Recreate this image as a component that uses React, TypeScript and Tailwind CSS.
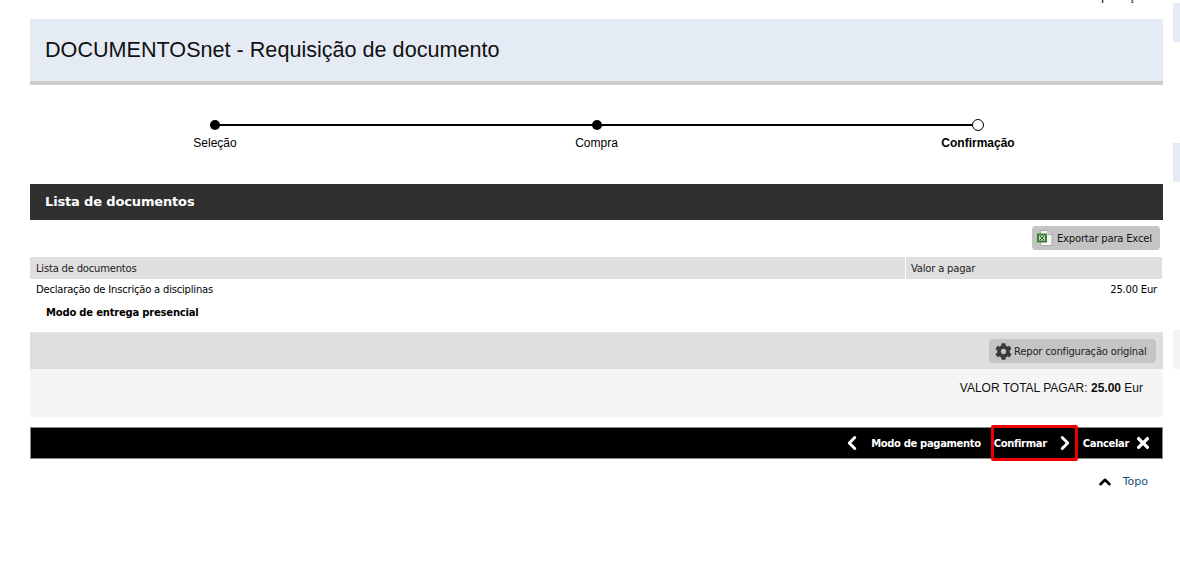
import { ChevronLeft, ChevronRight, ChevronUp } from "lucide-react";
import { FaCog, FaTimes } from "react-icons/fa";

const tableFont = "font-['DejaVu_Sans',sans-serif] text-[10px] tracking-[-0.2px]";

function ExcelIcon() {
  return (
    <svg width="16" height="16" viewBox="0 0 16 16">
      <path d="M3.5 0.5H11L15 4.5V15.5H3.5Z" fill="#f7f7f4" stroke="#a9a9a9" />
      <path d="M11 0.5V4.5H15" fill="#dedede" stroke="#a9a9a9" />
      <rect x="0" y="3.5" width="10" height="9" fill="#3f7f3c" />
      <rect x="2" y="5.5" width="6" height="5" fill="#bcd6b4" />
      <path d="M3 6L7 10M7 6L3 10" stroke="#2f6b2c" strokeWidth="1" />
    </svg>
  );
}

function Step({ label, state }: { label: string; state: "done" | "current" }) {
  return (
    <div className="flex w-[80px] flex-col items-center">
      {state === "done" ? (
        <div className="h-[10px] w-[10px] rounded-full bg-black" />
      ) : (
        <div className="h-[12px] w-[12px] rounded-full border border-black bg-white" />
      )}
      <span className={`whitespace-nowrap text-[12px] leading-[14px] text-black ${state === "current" ? "mt-[5px] font-bold" : "mt-[6px]"}`}>
        {label}
      </span>
    </div>
  );
}

export default function App() {
  return (
    <div className="flex h-[561px] overflow-hidden bg-white font-['Liberation_Sans',sans-serif] text-black">
      <main className="ml-[30px] w-[1133px] shrink-0">
        <div className="h-[19px] overflow-hidden pr-[15px] text-right">
          <div className="-mt-[11px] text-[12px] leading-[14px]">proteção</div>
        </div>

        <header className="flex h-[66px] items-center border-b-[4px] border-[#cbcbcb] bg-[#e5ebf4] pl-[15px]">
          <h1 className="text-[21.6px] leading-[26px] text-[#111]">DOCUMENTOSnet - Requisição de documento</h1>
        </header>

        {/* steps */}
        <div className="relative mt-[35px] flex h-[64px] justify-between pl-[145px] pr-[145px]">
          <div className="absolute left-[185px] right-[185px] top-[4px] h-[2px] bg-black" />
          <div className="relative"><Step label="Seleção" state="done" /></div>
          <div className="relative"><Step label="Compra" state="done" /></div>
          <div className="relative -mt-[1px]"><Step label="Confirmação" state="current" /></div>
        </div>

        <section className="flex h-[36px] items-center bg-[#303030] pl-[15px] font-['DejaVu_Sans',sans-serif] text-[13px] font-bold tracking-[-0.15px] text-white">
          Lista de documentos
        </section>

        <div className={`flex h-[37px] items-start justify-end pr-[3px] pt-[6px] ${tableFont}`}>
          <button className="flex h-[24px] w-[128px] items-center gap-[4px] rounded-[4px] bg-[#c4c4c4] pl-[5px] text-[#111]">
            <ExcelIcon />
            Exportar para Excel
          </button>
        </div>

        <div className={`flex h-[22px] w-[1132px] items-center bg-[#dfdfdf] text-[#222] ${tableFont}`}>
          <div className="w-[875px] pl-[6px]">Lista de documentos</div>
          <div className="flex h-full flex-1 items-center border-l border-white pl-[5px]">Valor a pagar</div>
        </div>
        <div className={`flex h-[20px] items-center justify-between pl-[6px] pr-[6px] ${tableFont}`}>
          <span>Declaração de Inscrição a disciplinas</span>
          <span>25.00 Eur</span>
        </div>
        <div className={`flex h-[26px] items-center pl-[16px] font-bold ${tableFont}`}>Modo de entrega presencial</div>

        <div className={`mt-[7px] flex h-[37px] items-center justify-end border-t border-[#e8e8e8] bg-[#dedede] pr-[7px] ${tableFont}`}>
          <button className="flex h-[24px] w-[167px] items-center gap-[2px] rounded-[4px] bg-[#c4c4c4] pl-[6px] text-[#222]">
            <FaCog size={17} color="#3a3a3a" />
            Repor configuração original
          </button>
        </div>

        <div className="flex h-[48px] justify-end bg-[#f5f5f5] pr-[20px] pt-[12px] text-[12px] leading-[14px] text-[#111]">
          <span>VALOR TOTAL PAGAR: <b>25.00</b> Eur</span>
        </div>

        <nav className="mt-[10px] flex h-[32px] items-center justify-end border border-[#888] bg-black pr-[10px] font-['DejaVu_Sans',sans-serif] text-[10px] font-bold tracking-[-0.35px] text-white">
          <ChevronLeft size={22} strokeWidth={3.2} />
          <span className="ml-[8px]">Modo de pagamento</span>
          <div className="ml-[10px] flex h-[36px] w-[87px] items-center justify-between rounded-[2px] border-[3px] border-[#f00000]">
            <span>Confirmar</span>
            <ChevronRight size={22} strokeWidth={3.2} className="-mr-[1px]" />
          </div>
          <span className="ml-[5px]">Cancelar</span>
          <FaTimes size={18} className="ml-[5px]" />
        </nav>

        <div className="mt-[14px] flex items-center justify-end pr-[15px] font-['DejaVu_Sans',sans-serif] text-[11px] text-[#15507a]">
          <ChevronUp size={18} strokeWidth={3.4} className="mr-[9px] text-black" />
          Topo
        </div>
      </main>

      {/* cut-off side column */}
      <aside className="ml-[10px] flex-1 pt-[3px]">
        <div className="h-[39px] bg-[#e5ebf4]" />
        <div className="mt-[101px] h-[39px] bg-[#e5ebf4]" />
        <div className="mt-[148px] h-[39px] bg-[#f5f5f5]" />
      </aside>
    </div>
  );
}
